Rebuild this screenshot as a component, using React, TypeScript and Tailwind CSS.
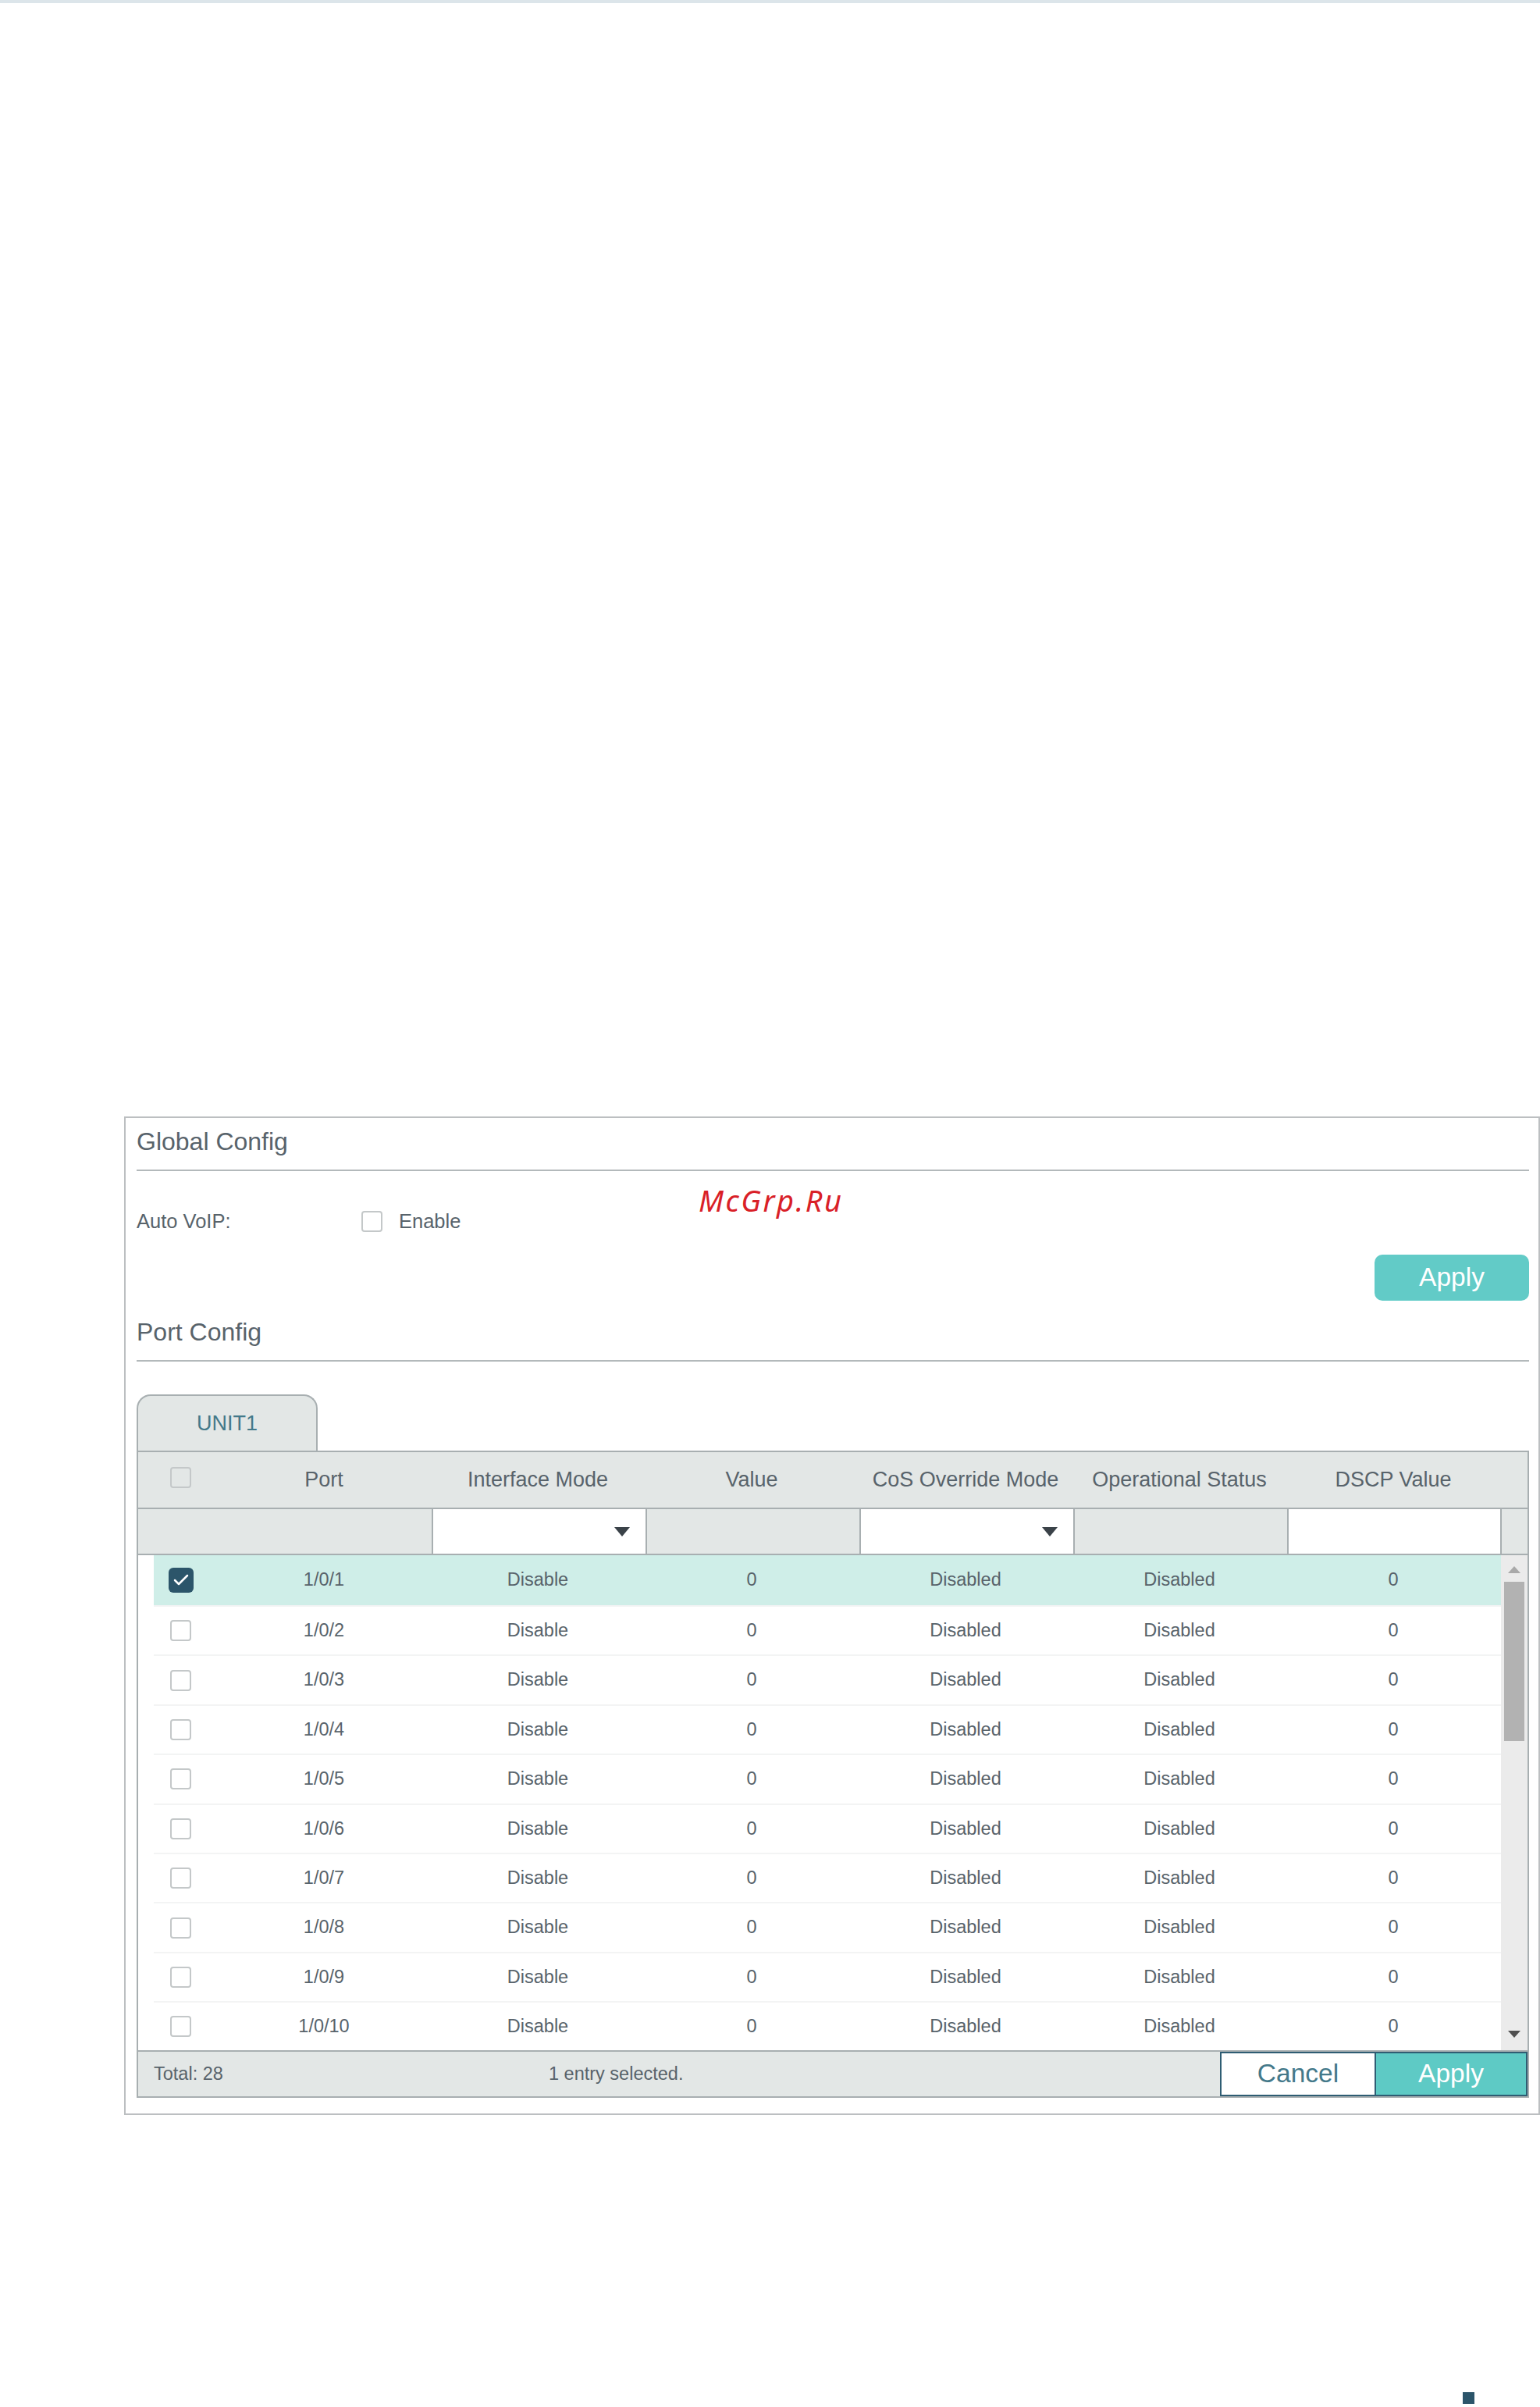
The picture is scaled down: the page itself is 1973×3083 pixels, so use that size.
import React from "react";
import { Check } from "lucide-react";

const rows = ["1/0/1", "1/0/2", "1/0/3", "1/0/4", "1/0/5", "1/0/6", "1/0/7", "1/0/8", "1/0/9", "1/0/10"];

const headers = ["Port", "Interface Mode", "Value", "CoS Override Mode", "Operational Status", "DSCP Value"];

const Checkbox = ({ checked = false }: { checked?: boolean }) =>
  checked ? (
    <span className="flex h-[32px] w-[32px] items-center justify-center rounded-[6px] bg-[#2c556a]">
      <Check className="h-[24px] w-[24px] text-white" strokeWidth={2.5} />
    </span>
  ) : (
    <span className="block h-[27px] w-[27px] rounded-[4px] border-2 border-[#c4c8c9] bg-transparent" />
  );

const SectionTitle = ({ title }: { title: string }) => (
  <div className="flex h-[68px] items-center border-b-2 border-[#b3b9bb] pb-[6px] text-[32px] leading-none text-[#58636b]">
    {title}
  </div>
);

const SelectCell = () => (
  <div className="flex w-[274px] items-center justify-end border-l-2 border-[#a8afb1] bg-white pr-[20px]">
    <svg width="20" height="14" viewBox="0 0 20 14">
      <path d="M0 1h20L10 13z" fill="#3a4248" />
    </svg>
  </div>
);

export default function App() {
  return (
    <div className="h-[3083px] w-[1973px] bg-white font-['Liberation_Sans',Arial,sans-serif]">
      <div className="h-[4px] bg-[#dce5ea]" />

      <div className="mt-[1426px] ml-[159px] h-[1279px] w-[1814px] border-2 border-[#bcbfc1] pr-[12px] pl-[14px]">
        <SectionTitle title="Global Config" />

        <div className="relative flex h-[107px] items-center pt-[22px] text-[25.5px] text-[#58636b]">
          <span className="w-[288px]">Auto VoIP:</span>
          <Checkbox />
          <span className="ml-[21px]">Enable</span>
          <span className="absolute top-[18px] left-[720px] font-['Noto_Sans',sans-serif] text-[38px] leading-none tracking-[2.5px] text-[#d92027] italic">
            McGrp.Ru
          </span>
        </div>

        <div className="flex justify-end">
          <button className="h-[59px] w-[198px] rounded-[10px] bg-[#62cbc7] text-[33.5px] text-white">Apply</button>
        </div>

        <div className="mt-[10px]">
          <SectionTitle title="Port Config" />
        </div>

        {/* tab */}
        <div className="mt-[42px] flex h-[74px] w-[232px] items-center justify-center rounded-t-[18px] border-2 border-b-0 border-[#a8afb1] bg-[#e3e7e6] pb-[2px] text-[27px] text-[#44798a]">
          UNIT1
        </div>

        {/* table */}
        <div className="-mt-[2px] w-[1784px] border-2 border-[#a8afb1]">
          <div className="flex h-[71px] items-center bg-[#e3e7e6] pl-[20px] text-[27px] text-[#58636b]">
            <div className="w-[81px] -translate-y-[3px] pl-[21px]">
              <Checkbox />
            </div>
            {headers.map((h) => (
              <div key={h} className="w-[274px] text-center whitespace-nowrap">
                {h}
              </div>
            ))}
          </div>

          <div className="flex h-[61px] border-y-2 border-[#a8afb1] bg-[#e3e7e6]">
            <div className="w-[376px]" />
            <SelectCell />
            <div className="w-[274px] border-l-2 border-[#a8afb1]" />
            <SelectCell />
            <div className="w-[274px] border-l-2 border-[#a8afb1]" />
            <div className="w-[275px] border-x-2 border-[#a8afb1] bg-white" />
          </div>

          <div className="flex h-[634px]">
            <div className="w-[1746px] pl-[20px]">
              {rows.map((port, i) => (
                <div
                  key={port}
                  className={
                    i === 0
                      ? "flex h-[64px] items-center bg-[#cfeee8] text-[23.5px] text-[#58636b]"
                      : "flex h-[63.4px] items-center border-t-2 border-[#f3f4f4] text-[23.5px] text-[#58636b] first:border-0"
                  }
                >
                  <div className={i === 0 ? "w-[81px] pl-[19px]" : "w-[81px] pl-[21px]"}>
                    <Checkbox checked={i === 0} />
                  </div>
                  <div className="w-[274px] text-center">{port}</div>
                  <div className="w-[274px] text-center">Disable</div>
                  <div className="w-[274px] text-center">0</div>
                  <div className="w-[274px] text-center">Disabled</div>
                  <div className="w-[274px] text-center">Disabled</div>
                  <div className="w-[274px] text-center">0</div>
                </div>
              ))}
            </div>

            {/* scrollbar */}
            <div className="flex w-[34px] flex-col items-center bg-[#ebebeb] pt-[14px]">
              <svg width="16" height="9" viewBox="0 0 16 9">
                <path d="M8 0l8 9H0z" fill="#a9a9a9" />
              </svg>
              <div className="mt-[11px] h-[204px] w-[26px] bg-[#b2b2b2]" />
              <svg className="mt-[371px]" width="16" height="9" viewBox="0 0 16 9">
                <path d="M0 0h16L8 9z" fill="#505050" />
              </svg>
            </div>
          </div>

          <div className="flex h-[59px] items-stretch border-t-2 border-[#a8afb1] bg-[#e3e7e6] text-[23.5px] text-[#58636b]">
            <div className="flex flex-1 items-center">
              <span className="ml-[20px] w-[344px]">Total: 28</span>
              <span className="ml-[162px]">1 entry selected.</span>
            </div>
            <button className="w-[198px] border-2 border-r-0 border-[#2f5d73] bg-white text-[33.5px] text-[#44798a]">
              Cancel
            </button>
            <button className="w-[196px] border-2 border-[#2f5d73] bg-[#5ecac5] text-[33.5px] text-white">Apply</button>
          </div>
        </div>
      </div>

      <div className="mt-[355px] ml-[1874px] h-[15px] w-[15px] bg-[#2c556a]" />
    </div>
  );
}
